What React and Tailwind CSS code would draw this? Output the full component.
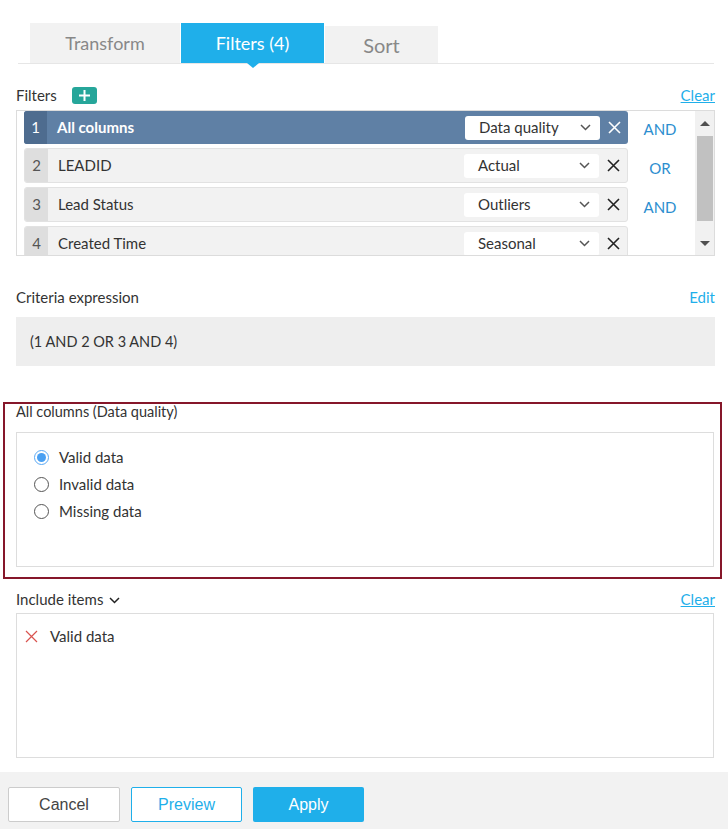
import React from "react";

const rows = [
  { n: 1, name: "All columns", value: "Data quality", active: true },
  { n: 2, name: "LEADID", value: "Actual" },
  { n: 3, name: "Lead Status", value: "Outliers" },
  { n: 4, name: "Created Time", value: "Seasonal" },
];

function Chevron({ className = "" }) {
  return (
    <svg width="11" height="7" viewBox="0 0 11 7" className={className}>
      <path d="M1 1l4.5 4.5L10 1" fill="none" stroke="currentColor" strokeWidth="1.5" />
    </svg>
  );
}

function Cross({ className = "", size = 13, width = 1.6 }) {
  return (
    <svg width={size} height={size} viewBox="0 0 13 13" className={className}>
      <path d="M1 1l11 11M12 1L1 12" fill="none" stroke="currentColor" strokeWidth={width} />
    </svg>
  );
}

function FilterRow({ row }) {
  const active = row.active;
  return (
    <div
      className={
        "flex items-center rounded-[3px] overflow-hidden shrink-0 " +
        (active ? "h-[33px] bg-[#5f80a5]" : "h-[35px] bg-[#f2f2f2] border border-[#e2e2e2]")
      }
    >
      <div
        className={
          "w-[23px] h-full flex items-center justify-center text-[15px] " +
          (active ? "bg-[#4e6c8f] text-white" : "bg-[#dedede] text-[#555]")
        }
      >
        {row.n}
      </div>
      <div className={"flex-1 pl-[10px] text-[15px] " + (active ? "text-white font-bold" : "text-[#333]")}>
        {row.name}
      </div>
      <div className="w-[135px] h-[24px] bg-white rounded-[3px] flex items-center justify-between pl-[14px] pr-[9px] text-[15px] text-[#333]">
        <span>{row.value}</span>
        <Chevron className="text-[#555]" />
      </div>
      <div className={"w-[28px] flex items-center justify-center " + (active ? "text-white" : "text-[#222]")}>
        <Cross />
      </div>
    </div>
  );
}

export default function App() {
  return (
    <div className="w-[728px] h-[829px] bg-white flex flex-col text-[#333]" style={{ fontFamily: "Lato, 'Open Sans', sans-serif" }}>
      {/* tabs */}
      <div className="pt-[23px] pl-[18px] pr-[14px]">
        <div className="flex items-end border-b border-[#e6e6e6] pl-3">
          <div className="w-[150px] h-[40px] bg-[#f2f2f2] flex items-center justify-center text-[18px] text-[#888]">Transform</div>
          <div className="relative w-[143px] h-[40px] ml-px bg-[#1fafea] flex items-center justify-center text-[18px] text-white">
            Filters (4)
            <div className="absolute left-1/2 -translate-x-1/2 top-full w-0 h-0 border-l-[6px] border-r-[6px] border-t-[5px] border-l-transparent border-r-transparent border-t-[#1fafea]" />
          </div>
          <div className="w-[113px] h-[37px] ml-px bg-[#f2f2f2] flex items-center justify-center text-[20px] text-[#888]">Sort</div>
        </div>
      </div>

      <div className="pl-4 pr-[13px]">
        {/* filters header */}
        <div className="mt-[22px] h-[18px] flex items-center justify-between">
          <div className="flex items-center gap-[15px]">
            <span className="text-[15px] text-[#333]">Filters</span>
            <span className="w-[25px] h-[17px] rounded-[3px] bg-[#26a69a] text-white flex items-center justify-center">
              <svg width="13" height="13" viewBox="0 0 13 13">
                <path d="M6.5 1v11M1 6.5h11" stroke="currentColor" strokeWidth="2" />
              </svg>
            </span>
          </div>
          <a className="text-[15px] text-[#1fafea] underline">Clear</a>
        </div>

        {/* filter list */}
        <div className="mt-[6px] h-[146px] border border-[#dcdcdc] flex overflow-hidden">
          <div className="w-[612px] pl-[7px] pr-px flex flex-col gap-[4px] overflow-hidden">
            {rows.map((r) => (
              <FilterRow key={r.n} row={r} />
            ))}
          </div>
          <div className="w-[62px] flex flex-col items-center pt-[8px] gap-[18px] text-[15px] text-[#2c8ecf]">
            <span className="leading-[21px]">AND</span>
            <span className="leading-[21px]">OR</span>
            <span className="leading-[21px]">AND</span>
          </div>
          <div className="ml-auto w-[19px] bg-[#f1f1f1] flex flex-col items-center">
            <div className="h-[25px] flex items-center justify-center">
              <div className="w-0 h-0 border-l-[5px] border-r-[5px] border-b-[5px] border-l-transparent border-r-transparent border-b-[#505050]" />
            </div>
            <div className="w-[16px] h-[85px] bg-[#c1c1c1]" />
            <div className="flex-1 flex items-end pb-[9px]">
              <div className="w-0 h-0 border-l-[5px] border-r-[5px] border-t-[5px] border-l-transparent border-r-transparent border-t-[#505050]" />
            </div>
          </div>
        </div>

        {/* criteria */}
        <div className="mt-[31px] h-[20px] flex items-center justify-between">
          <span className="text-[15px] text-[#333]">Criteria expression</span>
          <a className="text-[15px] text-[#1fafea]">Edit</a>
        </div>
        <div className="mt-[10px] h-[49px] bg-[#eeeeee] flex items-center pl-[14px] text-[14.5px] text-[#333]">
          (1 AND 2 OR 3 AND 4)
        </div>
      </div>

      {/* data quality panel */}
      <div className="mt-[36px] ml-[3px] mr-[6px] h-[177px] border-2 border-[#86172a] flex flex-col pl-[11px] pr-[6px] pb-[10px]">
        <div className="h-[18px] -mt-[1px] text-[14.5px] text-[#333] leading-[18px]">All columns (Data quality)</div>
        <div className="mt-[11px] flex-1 border border-[#dddddd] pl-[17px] pt-[15px] flex flex-col gap-[9px]">
          {["Valid data", "Invalid data", "Missing data"].map((t, i) => (
            <label key={t} className="flex items-center gap-[10px] text-[15px] text-[#333] h-[18px]">
              <span
                className={
                  "w-[15px] h-[15px] rounded-full border flex items-center justify-center bg-white " +
                  (i === 0 ? "border-[#5aa9f5]" : "border-[#555]")
                }
              >
                {i === 0 && <span className="w-[9px] h-[9px] rounded-full bg-[#4aa0f2]" />}
              </span>
              {t}
            </label>
          ))}
        </div>
      </div>

      {/* include items */}
      <div className="pl-4 pr-[13px]">
        <div className="mt-[10px] h-[20px] flex items-center justify-between">
          <span className="flex items-center gap-[6px] text-[15px] text-[#333]">
            Include items
            <Chevron className="text-[#222] mt-[2px]" />
          </span>
          <a className="text-[15px] text-[#1fafea] underline">Clear</a>
        </div>
        <div className="mt-[4px] mr-px h-[145px] border border-[#dddddd] pl-[8px] pt-[11px]">
          <div className="flex items-center gap-[12px] text-[15px] text-[#333]">
            <Cross className="text-[#d9534f]" size={13} width={1.2} />
            Valid data
          </div>
        </div>
      </div>

      {/* footer */}
      <div className="mt-auto h-[57px] bg-[#f2f2f2] flex items-start pt-[15px] pl-[8px] gap-[11px]" style={{ fontFamily: "'Liberation Sans', Arial, sans-serif" }}>
        <button className="w-[112px] h-[35px] bg-white border border-[#cccccc] rounded-[2px] text-[16px] text-[#444]">Cancel</button>
        <button className="w-[111px] h-[35px] bg-white border border-[#1fafea] rounded-[2px] text-[16px] text-[#1fafea]">Preview</button>
        <button className="w-[111px] h-[35px] bg-[#1fafea] rounded-[2px] text-[16px] text-white">Apply</button>
      </div>
    </div>
  );
}
